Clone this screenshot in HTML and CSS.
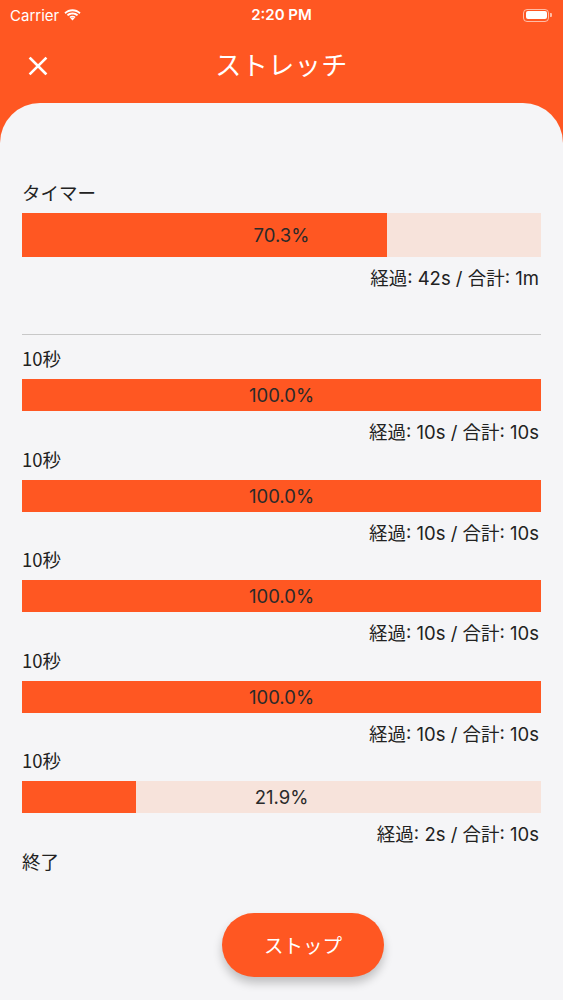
FILE: index.html
```html
<!DOCTYPE html>
<html lang="ja">
<head>
<meta charset="utf-8">
<link rel="stylesheet" href="styles.css">
</head>
<body>
<div class="app">
  <div class="status">
    <div class="status-left">
      <span class="carrier">Carrier</span>
      <svg class="wifi" width="17" height="12" viewBox="0 0 17 12">
        <path d="M8.5 2.2c2.6 0 5 1 6.8 2.7l1.3-1.3C14.4 1.5 11.6 0.3 8.5 0.3S2.6 1.5 0.4 3.6l1.3 1.3C3.5 3.2 5.9 2.2 8.5 2.2z" fill="#fff"/>
        <path d="M8.5 5.4c1.7 0 3.2.6 4.4 1.7l1.3-1.3C12.7 4.3 10.7 3.5 8.5 3.5S4.3 4.3 2.8 5.8l1.3 1.3C5.3 6 6.8 5.4 8.5 5.4z" fill="#fff"/>
        <path d="M8.5 8.5c.8 0 1.5.3 2.1.8l-2.1 2.2-2.1-2.2c.6-.5 1.3-.8 2.1-.8z" fill="#fff"/>
        <path d="M8.5 6.8c1.2 0 2.3.4 3.1 1.1l-1 1c-.6-.4-1.3-.7-2.1-.7s-1.5.3-2.1.7l-1-1c.8-.7 1.9-1.1 3.1-1.1z" fill="#fff"/>
      </svg>
    </div>
    <div class="status-time">2:20 PM</div>
    <div class="status-right">
      <div class="battery"><div class="battery-fill"></div></div>
      <div class="battery-cap"></div>
    </div>
  </div>
  <div class="header">
    <svg class="close" width="20" height="20" viewBox="0 0 20 20">
      <path d="M2.5 2.5L17.5 17.5M17.5 2.5L2.5 17.5" stroke="#fff" stroke-width="2.6" stroke-linecap="square"/>
    </svg>
    <div class="title">ストレッチ</div>
  </div>
  <div class="card">
    <div class="section">
      <div class="label">タイマー</div>
      <div class="bar bar-big">
        <div class="fill" style="width:70.3%"></div>
        <span class="pct">70.3%</span>
      </div>
      <div class="time">経過: 42s / 合計: 1m</div>
    </div>
    <div class="divider"></div>
    <div class="section">
      <div class="label">10秒</div>
      <div class="bar"><div class="fill" style="width:100%"></div><span class="pct">100.0%</span></div>
      <div class="time">経過: 10s / 合計: 10s</div>
    </div>
    <div class="section">
      <div class="label">10秒</div>
      <div class="bar"><div class="fill" style="width:100%"></div><span class="pct">100.0%</span></div>
      <div class="time">経過: 10s / 合計: 10s</div>
    </div>
    <div class="section">
      <div class="label">10秒</div>
      <div class="bar"><div class="fill" style="width:100%"></div><span class="pct">100.0%</span></div>
      <div class="time">経過: 10s / 合計: 10s</div>
    </div>
    <div class="section">
      <div class="label">10秒</div>
      <div class="bar"><div class="fill" style="width:100%"></div><span class="pct">100.0%</span></div>
      <div class="time">経過: 10s / 合計: 10s</div>
    </div>
    <div class="section">
      <div class="label">10秒</div>
      <div class="bar"><div class="fill" style="width:21.9%"></div><span class="pct">21.9%</span></div>
      <div class="time">経過: 2s / 合計: 10s</div>
    </div>
    <div class="section">
      <div class="label">終了</div>
    </div>
    <div class="actions">
      <button class="stop">ストップ</button>
    </div>
  </div>
</div>
</body>
</html>
```
FILE: styles.css
```css
* { box-sizing: border-box; }
html, body { margin: 0; padding: 0; }
body {
  width: 563px;
  height: 1000px;
  overflow: hidden;
  background: #ff5722;
  font-family: "Noto Sans CJK JP", "Noto Sans", sans-serif;
  color: #222;
}
.app {
  display: flex;
  flex-direction: column;
  height: 1000px;
}
.status {
  height: 30px;
  display: flex;
  align-items: center;
  justify-content: space-between;
  padding: 0 10px;
  color: #fff;
  position: relative;
}
.status-left { display: flex; align-items: center; gap: 5px; }
.carrier { font-family: "Inter", "Liberation Sans", sans-serif; font-size: 15px; }
.status-time {
  position: absolute;
  left: 0; right: 0; top: 0;
  text-align: center;
  line-height: 30px;
  font-family: "Inter", "Liberation Sans", sans-serif;
  font-weight: 600;
  font-size: 15px;
}
.status-right { display: flex; align-items: center; gap: 1px; padding-right: 1px; }
.battery {
  width: 26px; height: 13px;
  border: 1px solid rgba(255,255,255,0.6);
  border-radius: 4px;
  padding: 1.5px;
}
.battery-fill { width: 100%; height: 100%; background: #fff; border-radius: 2px; }
.battery-cap { width: 2px; height: 4px; background: rgba(255,255,255,0.6); border-radius: 0 1px 1px 0; }
.header {
  height: 73px;
  display: flex;
  align-items: center;
  position: relative;
  padding-left: 28px;
  padding-bottom: 2px;
}
.close { display: block; }
.title {
  position: absolute;
  left: 0; right: 0; top: 0; bottom: 6px;
  display: flex;
  align-items: center;
  justify-content: center;
  color: #fff;
  font-size: 26px;
  letter-spacing: 0.5px;
  pointer-events: none;
}
.card {
  flex: 1;
  background: #f5f5f7;
  border-radius: 40px 40px 0 0;
  padding: 77px 22px 0;
  display: flex;
  flex-direction: column;
}
.section { display: flex; flex-direction: column; }
.label {
  font-size: 18.5px;
  line-height: 24px;
  margin-bottom: 9px;
}
.bar {
  position: relative;
  height: 32px;
  background: #f7e3db;
  display: flex;
  align-items: center;
  justify-content: center;
}
.bar-big { height: 44px; }
.fill {
  position: absolute;
  left: 0; top: 0; bottom: 0;
  background: #ff5722;
}
.pct {
  position: relative;
  font-size: 18.5px;
  color: #2a2a2a;
  font-family: "Inter", "Noto Sans CJK JP", sans-serif;
}
.time {
  text-align: right;
  font-size: 18.5px;
  line-height: 24px;
  margin-top: 9px;
  margin-bottom: 2.5px;
  padding-right: 2px;
  font-family: "Inter", "Noto Sans CJK JP", sans-serif;
}
.divider {
  height: 1px;
  background: #c8c8c8;
  margin: 41.5px 0 11px;
}
.actions {
  display: flex;
  justify-content: center;
  margin-top: 31px;
  padding-left: 43px;
}
.stop {
  width: 162px;
  height: 64px;
  border: none;
  border-radius: 32px;
  background: #ff5722;
  color: #fff;
  font-family: "Noto Sans CJK JP", sans-serif;
  font-size: 19.5px;
  box-shadow: 0 6px 10px rgba(0,0,0,0.22);
}
```
